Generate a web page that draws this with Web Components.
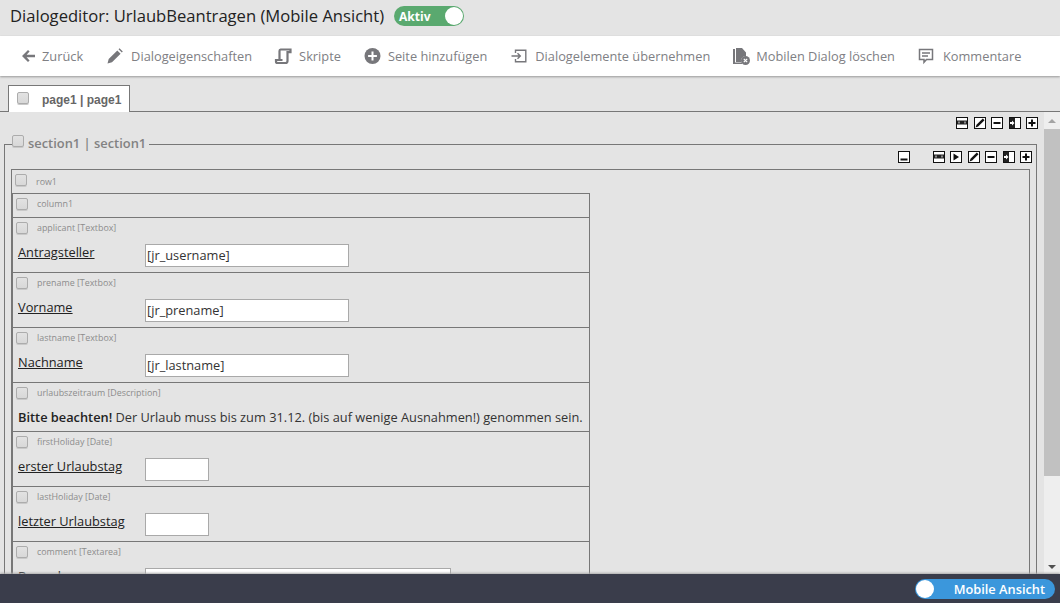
<!DOCTYPE html>
<html lang="de">
<head>
<meta charset="utf-8">
<title>Dialogeditor</title>
<style>
  html, body { margin: 0; height: 100%; overflow: hidden; }
  body { font-family: "Open Sans", "Liberation Sans", sans-serif; background: #e4e4e4; }
  #app { display: flex; flex-direction: column; height: 603px; }
</style>
</head>
<body>
<div id="app">
  <title-bar heading="Dialogeditor: UrlaubBeantragen (Mobile Ansicht)"></title-bar>
  <tool-bar>
    <tool-item icon="back" space="6" label="Zurück"></tool-item>
    <tool-item icon="pencil" style="margin-left:1px" label="Dialogeigenschaften"></tool-item>
    <tool-item icon="script" label="Skripte"></tool-item>
    <tool-item icon="plus" label="Seite hinzufügen"></tool-item>
    <tool-item icon="import" style="margin-left:1px" label="Dialogelemente übernehmen"></tool-item>
    <tool-item icon="delete" space="7" label="Mobilen Dialog löschen"></tool-item>
    <tool-item icon="comment" space="9" label="Kommentare"></tool-item>
  </tool-bar>
  <editor-area>
    <page-tab slot="tab" label="page1 | page1"></page-tab>
    <tool-row class="page-tools">
      <tool-btn icon="link"></tool-btn><tool-btn icon="edit"></tool-btn><tool-btn icon="minus"></tool-btn><tool-btn icon="move"></tool-btn><tool-btn icon="add"></tool-btn>
    </tool-row>
    <form-section label="section1 | section1">
      <tool-row slot="tools">
        <tool-btn icon="under" style="margin-right:17.6px"></tool-btn>
        <tool-btn icon="link"></tool-btn><tool-btn icon="play"></tool-btn><tool-btn icon="edit"></tool-btn><tool-btn icon="minus"></tool-btn><tool-btn icon="move"></tool-btn><tool-btn icon="add"></tool-btn>
      </tool-row>
      <form-row label="row1">
        <form-column label="column1">
          <form-field label="applicant [Textbox]" caption="Antragsteller" value="[jr_username]"></form-field>
          <form-field label="prename [Textbox]" caption="Vorname" value="[jr_prename]"></form-field>
          <form-field label="lastname [Textbox]" caption="Nachname" value="[jr_lastname]"></form-field>
          <form-note label="urlaubszeitraum [Description]"><b>Bitte beachten!</b> Der Urlaub muss bis zum 31.12. (bis auf wenige Ausnahmen!) genommen sein.</form-note>
          <form-field label="firstHoliday [Date]" caption="erster Urlaubstag" size="short"></form-field>
          <form-field label="lastHoliday [Date]" caption="letzter Urlaubstag" size="short"></form-field>
          <form-field label="comment [Textarea]" caption="Bemerkung" size="area"></form-field>
        </form-column>
      </form-row>
    </form-section>
  </editor-area>
  <foot-bar></foot-bar>
</div>

<script>
const ICONS = {
  back: '<path d="M8 2 2 8l6 6 1.600-1.500L6.600 9.300H15V6.700H6.600l3-3.200z"/>',
  pencil: '<path d="M.5 15.500 1.700 11 10.300 2.400l3.300 3.300L5 14.300zM11.500 1.200 12.500.2l3.300 3.300-1 1z"/>',
  script: '<path fill="none" stroke="currentColor" stroke-width="2.200" d="M5.500 1.500h10v2.700h-3V13c0 1.400-.8 2-2 2H2.500c-1 0-1.500-.6-1.500-1.500V12h6.500M4.500 12V3c0-1 .4-1.500 1-1.500"/>',
  plus: '<circle cx="8.500" cy="8" r="8"/><path fill="#fff" d="M7.500 3.600h2V7h3.400v2H9.500v3.400h-2V9H4.100V7h3.400z"/>',
  import: '<path fill="none" stroke="currentColor" stroke-width="1.400" d="M4.500 5V2.200h10.300v11.600H4.500V11M.5 8h8.500M6.500 5.200 9.300 8 6.500 10.800"/>',
  delete: '<path d="M0 1h2v13.500h7V16H0z"/><path d="M3 0h6l4 4.500V8a4.500 4.500 0 0 0-4.800 6H3z"/><circle cx="12.500" cy="12.500" r="4.500"/><path stroke="#fff" stroke-width="1.200" d="m10.800 10.800 3.400 3.400m0-3.400-3.400 3.400"/>',
  comment: '<path fill="none" stroke="currentColor" stroke-width="1.500" d="M1.500 1.500h13v10H8.500L6 14.300V11.500H1.500z"/><path fill="none" stroke="currentColor" stroke-width="1.400" d="M4 5h8M4 8h6"/>'
};
// drawn on the 10x10 inside of the button's border
const BTN_ICONS = {
  link: '<rect x="0" y="2.500" width="10" height="4" fill="#222"/><path fill="#8a8a8a" d="M1 3.500h2v2H1zM7 3.500h2v2H7z"/>',
  edit: '<path fill="#111" d="M.5 9.500 1.500 6.800 7.800.5 9.500 2.200 3.200 8.500z"/>',
  minus: '<rect x="1.500" y="4" width="7" height="2" fill="#111"/>',
  add: '<path fill="#111" d="M4 1.500h2V4h2.500v2H6v2.500H4V6H1.500V4H4z"/>',
  under: '<rect x="1.500" y="6.500" width="7" height="2" fill="#111"/>',
  play: '<path fill="#111" d="M2.500 1.500 8 5 2.500 8.500z"/>',
  move: '<rect x="0" y="0" width="5" height="10" fill="#222"/><path fill="#fff" d="M0 4h2V2.500L4.500 5 2 7.500V6H0z"/>'
};

class TitleBar extends HTMLElement {
  connectedCallback() {
    const root = this.attachShadow({ mode: 'open' });
    root.innerHTML = `
      <style>
        :host { display: flex; align-items: center; box-sizing: border-box; height: 36px; flex: none; padding: 0 0 4px 10px; background: #e4e4e4; }
        h1 { margin: 0; font: 400 16.6px/32px "Open Sans", sans-serif; color: #222; }
        .switch { display: flex; align-items: center; justify-content: space-between; box-sizing: border-box;
          width: 70px; height: 20px; margin-left: 10px; padding: 0 1px 0 5px; border-radius: 10px;
          background: #5aa96f; color: #fff; font: 700 12px "Open Sans", sans-serif; }
        .knob { width: 18px; height: 18px; border-radius: 50%; background: #fff; }
      </style>
      <h1>${this.getAttribute('heading')}</h1>
      <div class="switch"><span>Aktiv</span><span class="knob"></span></div>`;
  }
}

class ToolBar extends HTMLElement {
  constructor() {
    super();
    this.attachShadow({ mode: 'open' }).innerHTML = `
      <style>
        :host { display: flex; align-items: center; gap: 23px; height: 40px; flex: none; padding-left: 20px;
          background: #fff; box-shadow: 0 1px 2px #999; position: relative; }
      </style><slot></slot>`;
  }
}

class ToolItem extends HTMLElement {
  connectedCallback() {
    const root = this.attachShadow({ mode: 'open' });
    const space = this.getAttribute('space') || 8;
    root.innerHTML = `
      <style>
        :host { display: flex; align-items: center; color: #808084; font: 400 12.8px "Open Sans", sans-serif; white-space: nowrap; }
        svg { width: 16px; height: 16px; margin-right: ${space}px; fill: currentColor; flex: none; color: #77777b; overflow: visible; }
      </style>
      <svg viewBox="0 0 16 16">${ICONS[this.getAttribute('icon')]}</svg><span>${this.getAttribute('label')}</span>`;
  }
}

class EditorArea extends HTMLElement {
  constructor() {
    super();
    this.attachShadow({ mode: 'open' }).innerHTML = `
      <style>
        :host { display: flex; flex-direction: column; flex: 1; min-height: 0; overflow: hidden; padding-top: 9px; }
        .main { display: flex; flex: 1; min-height: 0; }
        .content { flex: 1; min-width: 0; overflow: hidden; }
        .bar { width: 16px; flex: none; background: #eeeeee; display: flex; flex-direction: column; align-items: center; justify-content: space-between; }
        .track { flex: 1; width: 100%; }
        .thumb { height: 347px; margin-top: 6px; background: #c1c1c1; }
        i { display: block; width: 0; height: 0; border: 4px solid transparent; flex: none; }
        .up { border-bottom: 4px solid #a3a3a3; border-top: 0; margin-top: 7px; }
        .down { border-top: 4px solid #505050; border-bottom: 0; margin-bottom: 5px; }
      </style>
      <slot name="tab"></slot>
      <div class="main">
        <div class="content"><slot></slot></div>
        <div class="bar"><i class="up"></i><div class="track"><div class="thumb"></div></div><i class="down"></i></div>
      </div>`;
  }
}

class CheckBox extends HTMLElement {
  constructor() {
    super();
    this.attachShadow({ mode: 'open' }).innerHTML = `
      <style>
        :host { display: block; box-sizing: border-box; width: 12px; height: 12px; flex: none; border: 1px solid #acacac;
          border-radius: 2px; background: linear-gradient(#e2e2e2, #d8d8d8); box-shadow: 0 1px 0 #c9c9c9; }
      </style>`;
  }
}

class PageTab extends HTMLElement {
  connectedCallback() {
    const root = this.attachShadow({ mode: 'open' });
    root.innerHTML = `
      <style>
        :host { display: block; height: 27px; box-sizing: border-box; border-bottom: 1px solid #777; padding-left: 8px; }
        .tab { display: inline-flex; box-sizing: border-box; height: 27px; width: 122px; padding: 6px 0 0 8px; gap: 13px;
          background: #fff; border: 1px solid #777; border-bottom: 0; font: 700 12px/17px "Liberation Sans", sans-serif; color: #666; }
      </style>
      <div class="tab"><check-box></check-box><span>${this.getAttribute('label')}</span></div>`;
  }
}

class ToolRow extends HTMLElement {
  constructor() {
    super();
    this.attachShadow({ mode: 'open' }).innerHTML = `
      <style>
        :host { display: flex; justify-content: flex-end; gap: 5.4px; height: 12px; }
        :host(.page-tools) { padding: 5px 6px 0 0; }
      </style><slot></slot>`;
  }
}

class ToolBtn extends HTMLElement {
  connectedCallback() {
    const root = this.attachShadow({ mode: 'open' });
    root.innerHTML = `
      <style>
        :host { display: block; box-sizing: border-box; width: 12px; height: 12px; flex: none; background: #fff; border: 1px solid #111; }
        svg { display: block; width: 10px; height: 10px; }
      </style>
      <svg viewBox="0 0 10 10">${BTN_ICONS[this.getAttribute('icon')]}</svg>`;
  }
}

class FormSection extends HTMLElement {
  connectedCallback() {
    const root = this.attachShadow({ mode: 'open' });
    root.innerHTML = `
      <style>
        :host { display: block; position: relative; margin: 15px 7px 0 4px; border: 1px solid #777; padding: 6px 6px 0 6px; }
        .legend { position: absolute; left: 7px; top: -10px; display: flex; align-items: flex-start; gap: 4px; padding-right: 3px;
          background: #e4e4e4; color: #828282; font: 600 12.9px/18px "Open Sans", sans-serif; white-space: nowrap; }
        .legend span { margin-top: -1px; }
        .tools { margin: 0 -2px 6px 0; }
      </style>
      <div class="legend"><check-box></check-box><span>${this.getAttribute('label')}</span></div>
      <div class="tools"><slot name="tools"></slot></div>
      <slot></slot>`;
  }
}

const HEAD_STYLE = `
  .head { display: flex; align-items: center; gap: 9px; height: 20px; padding-left: 3px; color: #8c8c8c; font: 400 8.9px "Open Sans", sans-serif; white-space: nowrap; }
  .head span { margin-top: -2px; }`;

class FormRow extends HTMLElement {
  connectedCallback() {
    const root = this.attachShadow({ mode: 'open' });
    root.innerHTML = `
      <style>
        :host { display: block; border: 1px solid #777; }
        ${HEAD_STYLE}
        .head { margin-bottom: 3px; }
        .head span { margin-top: 2px; }
      </style>
      <div class="head"><check-box></check-box><span>${this.getAttribute('label')}</span></div>
      <slot></slot>`;
  }
}

class FormColumn extends HTMLElement {
  connectedCallback() {
    const root = this.attachShadow({ mode: 'open' });
    root.innerHTML = `
      <style>
        :host { display: block; width: 576px; border: 1px solid #777; }
        ${HEAD_STYLE}
        .head { margin-bottom: 3px; }
      </style>
      <div class="head"><check-box></check-box><span>${this.getAttribute('label')}</span></div>
      <slot></slot>`;
  }
}

class FormField extends HTMLElement {
  connectedCallback() {
    const root = this.attachShadow({ mode: 'open' });
    const size = this.getAttribute('size') || 'long';
    root.innerHTML = `
      <style>
        :host { display: block; height: 54px; border-top: 1px solid #777; }
        ${HEAD_STYLE}
        .body { display: flex; align-items: flex-start; padding: 6px 0 0 5px; }
        label { width: 127px; flex: none; color: #222; font: 400 12.8px/18px "Open Sans", sans-serif; text-decoration: underline; margin-top: -1px; }
        .input { box-sizing: border-box; height: 23px; background: #fff; border: 1px solid #a9a9a9; padding-left: 1px;
          color: #333; font: 400 12.8px/20px "Open Sans", sans-serif; }
        .long { width: 204px; } .short { width: 64px; } .area { width: 306px; height: 60px; }
      </style>
      <div class="head"><check-box></check-box><span>${this.getAttribute('label')}</span></div>
      <div class="body"><label>${this.getAttribute('caption')}</label><div class="input ${size}">${this.getAttribute('value') || ''}</div></div>`;
  }
}

class FormNote extends HTMLElement {
  connectedCallback() {
    const root = this.attachShadow({ mode: 'open' });
    root.innerHTML = `
      <style>
        :host { display: block; height: 48px; border-top: 1px solid #777; }
        ${HEAD_STYLE}
        .text { padding: 5px 0 0 5px; color: #333; font: 400 12.8px/18px "Open Sans", sans-serif; white-space: nowrap; }
        ::slotted(b) { color: #222; font-weight: 600; }
      </style>
      <div class="head"><check-box></check-box><span>${this.getAttribute('label')}</span></div>
      <div class="text"><slot></slot></div>`;
  }
}

class FootBar extends HTMLElement {
  constructor() {
    super();
    this.attachShadow({ mode: 'open' }).innerHTML = `
      <style>
        :host { display: flex; align-items: center; justify-content: flex-end; flex: none; height: 29px; padding-right: 5px;
          background: #3a3d4b; box-shadow: 0 -1px 2px #aaa; position: relative; }
        .switch { display: flex; align-items: center; justify-content: space-between; box-sizing: border-box; width: 140px; height: 20px;
          padding: 0 10px 0 1px; border-radius: 10px; background: #3b97dc; color: #fff; font: 600 12.8px "Open Sans", sans-serif; }
        .knob { width: 18px; height: 18px; border-radius: 50%; background: #fff; }
      </style>
      <div class="switch"><span class="knob"></span><span>Mobile Ansicht</span></div>`;
  }
}

customElements.define('title-bar', TitleBar);
customElements.define('tool-bar', ToolBar);
customElements.define('tool-item', ToolItem);
customElements.define('editor-area', EditorArea);
customElements.define('check-box', CheckBox);
customElements.define('page-tab', PageTab);
customElements.define('tool-row', ToolRow);
customElements.define('tool-btn', ToolBtn);
customElements.define('form-section', FormSection);
customElements.define('form-row', FormRow);
customElements.define('form-column', FormColumn);
customElements.define('form-field', FormField);
customElements.define('form-note', FormNote);
customElements.define('foot-bar', FootBar);
</script>
</body>
</html>
